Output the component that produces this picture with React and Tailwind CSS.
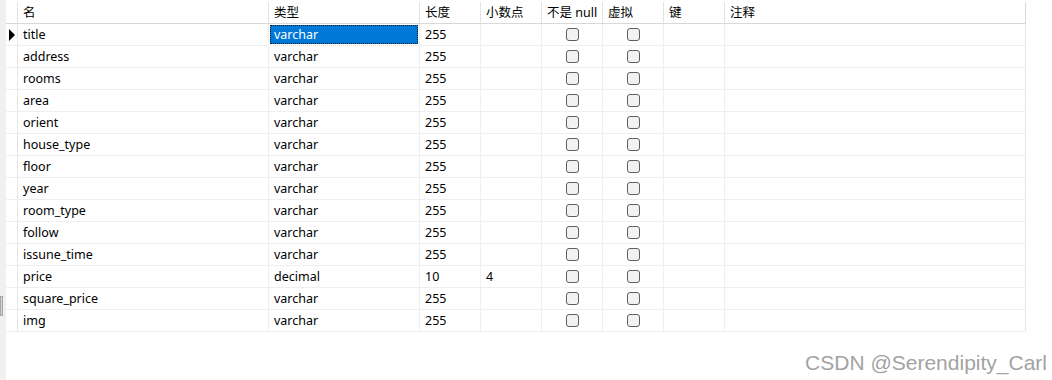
import React from "react";

const rows = [
  ["title", "varchar", "255", ""],
  ["address", "varchar", "255", ""],
  ["rooms", "varchar", "255", ""],
  ["area", "varchar", "255", ""],
  ["orient", "varchar", "255", ""],
  ["house_type", "varchar", "255", ""],
  ["floor", "varchar", "255", ""],
  ["year", "varchar", "255", ""],
  ["room_type", "varchar", "255", ""],
  ["follow", "varchar", "255", ""],
  ["issune_time", "varchar", "255", ""],
  ["price", "decimal", "10", "4"],
  ["square_price", "varchar", "255", ""],
  ["img", "varchar", "255", ""],
];

const font = { fontFamily: '"Noto Sans", "Noto Sans CJK SC", sans-serif' };

function Box() {
  return <div className="w-[13px] h-[13px] rounded-[3px] border border-[#5f5f5f] bg-[#f2f2f2]" />;
}

export default function App() {
  return (
    <div className="relative w-[1052px] h-[380px] bg-white overflow-hidden text-[12.5px] text-black" style={font}>
      <div className="flex h-full">
        <div className="w-[6px] h-full bg-[#f0f0f0] flex flex-col">
          <div className="h-[296px]" />
          <div className="w-[3px] h-[20px] bg-[#d4d4d4] border border-[#a8a8a8]" />
        </div>
        <div className="flex flex-col">
          <div className="h-[2px]" />
          <div className="flex h-[22px] border-b border-[#d9d9d9] leading-[21px]">
            <div className="w-[12px] border-r border-[#e3e3e3]" />
            <div className="w-[251px] border-r border-[#e3e3e3] pl-[5px]">名</div>
            <div className="w-[151px] border-r border-[#e3e3e3] pl-[5px]">类型</div>
            <div className="w-[61px] border-r border-[#e3e3e3] pl-[5px]">长度</div>
            <div className="w-[61px] border-r border-[#e3e3e3] pl-[5px]">小数点</div>
            <div className="w-[61px] border-r border-[#e3e3e3] pl-[5px] whitespace-nowrap">不是 null</div>
            <div className="w-[61px] border-r border-[#e3e3e3] pl-[5px]">虚拟</div>
            <div className="w-[61px] border-r border-[#e3e3e3] pl-[5px]">键</div>
            <div className="w-[301px] border-r border-[#d9d9d9] pl-[5px]">注释</div>
          </div>
          {rows.map((r, i) => (
            <div key={i} className="flex h-[22px] border-b border-[#efefef] leading-[21px]">
              <div className="w-[12px] border-r border-[#e6e6e6] flex items-center justify-center">
                {i === 0 && (
                  <svg width="7" height="12" viewBox="0 0 7 12"><path d="M1 0 L7 6 L1 12 Z" fill="#000" /></svg>
                )}
              </div>
              <div className="w-[251px] border-r border-[#efefef] pl-[5px]">{r[0]}</div>
              <div className="w-[151px] border-r border-[#efefef] p-[1px]">
                {i === 0 ? (
                  <div className="h-full bg-[#0078d7] text-white pl-[4px] leading-[19px] outline-1 outline-dotted outline-[#1e1e1e] -outline-offset-1">{r[1]}</div>
                ) : (
                  <div className="pl-[4px] leading-[19px]">{r[1]}</div>
                )}
              </div>
              <div className="w-[61px] border-r border-[#efefef] pl-[5px]">{r[2]}</div>
              <div className="w-[61px] border-r border-[#efefef] pl-[5px]">{r[3]}</div>
              <div className="w-[61px] border-r border-[#efefef] flex items-center justify-center"><Box /></div>
              <div className="w-[61px] border-r border-[#efefef] flex items-center justify-center"><Box /></div>
              <div className="w-[61px] border-r border-[#efefef]" />
              <div className="w-[301px] border-r border-[#e6e6e6]" />
            </div>
          ))}
        </div>
      </div>
      <div className="absolute right-[5px] bottom-[5px] text-[21px] leading-[24px] text-[#a3a3a3]" style={{ fontFamily: '"Liberation Sans", Arial, sans-serif' }}>
        CSDN @Serendipity_Carl
      </div>
    </div>
  );
}
